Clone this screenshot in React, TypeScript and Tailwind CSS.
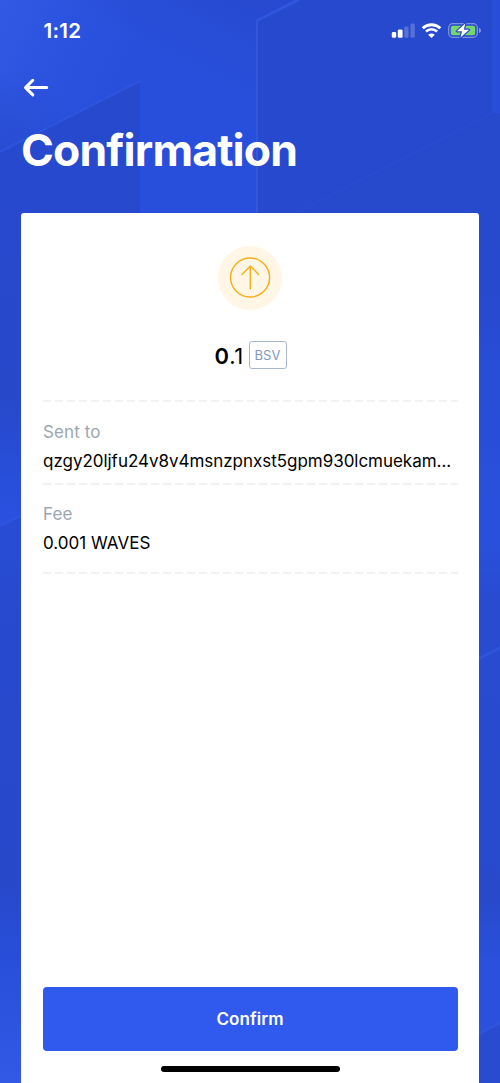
import React from "react";

function Backdrop() {
  return (
    <svg className="absolute inset-0" width="500" height="1083" viewBox="0 0 500 1083" fill="none" aria-hidden="true">
      <defs>
        <linearGradient id="base" x1="0" y1="0" x2="130" y2="60" gradientUnits="userSpaceOnUse">
          <stop offset="0" stopColor="#3159e4" />
          <stop offset="0.5" stopColor="#2c53df" />
          <stop offset="1" stopColor="#284fdb" />
        </linearGradient>
        <linearGradient id="top" x1="200" y1="75" x2="245" y2="-15" gradientUnits="userSpaceOnUse">
          <stop offset="0" stopColor="#2749cf" stopOpacity="0" />
          <stop offset="1" stopColor="#2749cf" />
        </linearGradient>
        <radialGradient id="shade" cx="0" cy="152" r="85" gradientUnits="userSpaceOnUse">
          <stop offset="0" stopColor="#2749cc" stopOpacity="0.7" />
          <stop offset="1" stopColor="#2749cc" stopOpacity="0" />
        </radialGradient>
        <linearGradient id="leftTop" x1="0" y1="150" x2="0" y2="525" gradientUnits="userSpaceOnUse">
          <stop offset="0" stopColor="#2749ce" />
          <stop offset="0.65" stopColor="#2748c9" />
          <stop offset="0.9" stopColor="#284fdc" />
          <stop offset="1" stopColor="#2a51df" />
        </linearGradient>
        <linearGradient id="leftLow" x1="0" y1="515" x2="0" y2="1083" gradientUnits="userSpaceOnUse">
          <stop offset="0" stopColor="#284dd5" />
          <stop offset="0.2" stopColor="#2749cd" />
          <stop offset="0.65" stopColor="#2748c9" />
          <stop offset="0.77" stopColor="#284ed9" />
          <stop offset="1" stopColor="#3159e5" />
        </linearGradient>
        <linearGradient id="right" x1="0" y1="213" x2="0" y2="1028" gradientUnits="userSpaceOnUse">
          <stop offset="0" stopColor="#2749cb" />
          <stop offset="0.1" stopColor="#2749ce" />
          <stop offset="0.2" stopColor="#284dd7" />
          <stop offset="0.4" stopColor="#2950dd" />
          <stop offset="0.475" stopColor="#284bd0" />
          <stop offset="0.54" stopColor="#284bd0" />
          <stop offset="0.84" stopColor="#2749ca" />
          <stop offset="0.92" stopColor="#2a50dd" />
          <stop offset="1" stopColor="#2a50dd" />
        </linearGradient>
      </defs>
      <rect width="500" height="1083" fill="url(#base)" />
      <path d="M0 0H300L257 21V213H0Z" fill="url(#top)" />
      <path d="M0 0H140V81L0 152Z" fill="url(#shade)" />
      <path d="M0 152L140 81V213H21V516L0 526Z" fill="url(#leftTop)" />
      <path d="M0 152L140 81" stroke="#3055df" strokeWidth="2.5" opacity="0.75" />
      <path d="M0 526L21 516V1083H0Z" fill="url(#leftLow)" />
      <path d="M0 526L22 515" stroke="#3055df" strokeWidth="3" opacity="0.7" />
      <path d="M257 20L297 0H492V113L297 213H257Z" fill="#2749cd" />
      <path d="M492 0H500V113H492Z" fill="#284dd8" />
      <path d="M297 213L492 113H500V213Z" fill="#2749cb" />
      <path d="M257 21V213" stroke="#3457da" strokeWidth="2" />
      <path d="M256 21L300 -1" stroke="#3055df" strokeWidth="3" />
      <path d="M297 213L492 113" stroke="#2c4fd1" strokeWidth="2" opacity="0.5" />
      <rect x="478" y="213" width="22" height="870" fill="url(#right)" />
      <path d="M478 1034L500 1023V1083H478Z" fill="#284bd0" />
      <path d="M478 659L502 647M478 1034L502 1022" stroke="#3056df" strokeWidth="3" opacity="0.8" />
    </svg>
  );
}

function StatusIcons() {
  return (
    <svg width="92" height="18" viewBox="0 0 92 18" fill="none" aria-hidden="true">
      <g fill="#fff">
        <rect x="1.8" y="10" width="4.4" height="5.8" rx="1.4" />
        <rect x="7.8" y="7.4" width="4.8" height="8.4" rx="1.4" />
        <rect x="14.2" y="4.6" width="4.4" height="11.2" rx="1.4" opacity="0.22" />
        <rect x="20.4" y="1.6" width="4.4" height="14.2" rx="1.4" opacity="0.22" />
      </g>
      <g transform="translate(31.4 1)">
        <path d="M1.3 5.2C6.4.5 13.8.5 18.9 5.2" stroke="#fff" strokeWidth="2.9" />
        <path d="M4.5 8.6C7.8 5.7 12.4 5.7 15.7 8.6" stroke="#fff" strokeWidth="2.7" />
        <path d="M6.8 11.7C8.7 10 11.5 10 13.4 11.7L10.1 15Z" fill="#fff" />
      </g>
      <rect x="58.7" y="1.7" width="28.6" height="13.6" rx="4" stroke="#fff" strokeOpacity="0.4" strokeWidth="1.3" />
      <path d="M89 6v5c1.1-.3 1.9-1.2 1.9-2.5S90.1 6.3 89 6Z" fill="#fff" opacity="0.45" />
      <rect x="60.8" y="3.8" width="24.4" height="9.4" rx="2" fill="#75d66b" />
      <path d="M75.2 1.6L66.9 9.3H72L70.5 15.6L79.1 7.7H73.9Z" fill="#fff" stroke="#284acc" strokeWidth="2.4" paintOrder="stroke" strokeLinejoin="round" />
    </svg>
  );
}

function Divider() {
  return (
    <svg className="block h-[2px] w-[415px]" viewBox="0 0 415 2" aria-hidden="true">
      <path d="M0 1H415" stroke="#eeeef0" strokeWidth="1.4" strokeDasharray="8.2 3.8" />
    </svg>
  );
}

export default function App() {
  return (
    <main className="relative h-[1083px] w-[500px] overflow-hidden bg-[#2749cd] font-['Inter',sans-serif]">
      <Backdrop />
      <div className="relative flex h-full flex-col">
        <header className="h-[213px]">
          <div className="flex h-[62px] items-center justify-between pr-[18px] pl-[43.5px]">
            <span className="text-[20.5px] leading-6 font-semibold tracking-[0.3px] text-white">1:12</span>
            <StatusIcons />
          </div>
          <button type="button" aria-label="Back" className="ml-[22px] flex h-[52px] w-8 items-center">
            <svg width="28" height="20" viewBox="0 0 28 20" fill="none" stroke="#fff" strokeWidth="3" strokeLinecap="round" strokeLinejoin="round">
              <path d="M3.5 9.6H24.7M10.8 2.3L3.5 9.6L10.8 16.9" />
            </svg>
          </button>
          <h1 className="pt-[8px] pl-[21px] text-[44.5px] leading-[56px] font-bold tracking-[-0.85px] text-white">Confirmation</h1>
        </header>
        <section className="mx-[21px] flex flex-1 flex-col rounded-t-[3px] bg-white px-[22px]">
          <div className="flex flex-col items-center pt-[32.5px]">
            <div className="flex size-16 items-center justify-center rounded-full bg-[#fff6e5]">
              <svg width="42" height="42" viewBox="0 0 42 42" fill="none" stroke="#f5ae17" strokeWidth="1.4" strokeLinecap="round" strokeLinejoin="round">
                <circle cx="21.1" cy="20.5" r="19.5" />
                <path d="M21.3 32V9M13 17.5L21.3 9L29.6 17.5" />
              </svg>
            </div>
            <div className="mt-[31.5px] flex h-[28px] items-center gap-[5px] pl-px">
              <span className="pt-px text-[22px] leading-7 tracking-[0.4px] text-black"><b className="font-semibold">0</b>.1</span>
              <span className="flex h-[28px] w-[38px] items-center justify-center rounded-[3px] border border-[#a8b8d1] pt-px text-[13px] tracking-[0.1px] text-[#8299bf]">BSV</span>
            </div>
          </div>
          <div className="mt-[31px]"><Divider /></div>
          <dl className="h-[81px] pt-[18px]">
            <dt className="text-[17px] leading-6 tracking-[0.1px] text-[#9ba6b2]">Sent to</dt>
            <dd className="mt-[5px] text-[17px] leading-6 tracking-[-0.03px] whitespace-nowrap text-black">qzgy20ljfu24v8v4msnzpnxst5gpm930lcmuekam...</dd>
          </dl>
          <Divider />
          <dl className="h-[87px] pt-[17px]">
            <dt className="text-[17px] leading-6 tracking-[0.1px] text-[#9ba6b2]">Fee</dt>
            <dd className="mt-[5px] text-[17px] leading-6 tracking-[0.02px] text-black">0.001 WAVES</dd>
          </dl>
          <Divider />
          <div className="mt-auto flex h-[96px] flex-col items-center">
            <button type="button" className="h-16 w-[415px] shrink-0 rounded-[4px] bg-[#2f5aed] pt-[2px] text-[17px] font-semibold tracking-[0.05px] text-white">Confirm</button>
            <div className="mt-[15px] h-[6px] w-[179px] rounded-full bg-black" />
          </div>
        </section>
      </div>
    </main>
  );
}
